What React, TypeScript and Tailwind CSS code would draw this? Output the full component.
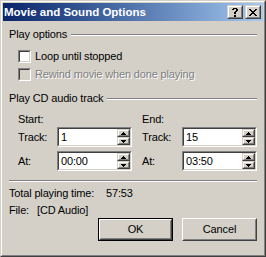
import React from "react";

function CaptionBtn({ children }: { children: React.ReactNode }) {
  return (
    <div className="w-[16px] h-[14px] border border-t-[#D4D0C8] border-l-[#D4D0C8] border-r-[#404040] border-b-[#404040]">
      <div className="w-full h-full border border-t-white border-l-white border-r-[#808080] border-b-[#808080] bg-[#D4D0C8] flex items-center justify-center">
        {children}
      </div>
    </div>
  );
}

function Checkbox({ disabled }: { disabled?: boolean }) {
  return (
    <div className="w-[13px] h-[13px] shrink-0 border border-t-[#808080] border-l-[#808080] border-r-white border-b-white">
      <div
        className={`w-full h-full border border-t-[#404040] border-l-[#404040] border-r-[#D4D0C8] border-b-[#D4D0C8] ${
          disabled ? "bg-[#D4D0C8]" : "bg-white"
        }`}
      />
    </div>
  );
}

function SpinHalf({ up }: { up?: boolean }) {
  return (
    <div className="h-[8px] border border-t-[#D4D0C8] border-l-[#D4D0C8] border-r-[#404040] border-b-[#404040]">
      <div className="w-full h-full border border-t-white border-l-white border-r-[#808080] border-b-[#808080] bg-[#D4D0C8] flex items-center justify-center">
        <svg width="5" height="3" viewBox="0 0 5 3" shapeRendering="crispEdges">
          {up ? (
            <>
              <rect x="2" y="0" width="1" height="1" fill="#000" />
              <rect x="1" y="1" width="3" height="1" fill="#000" />
              <rect x="0" y="2" width="5" height="1" fill="#000" />
            </>
          ) : (
            <>
              <rect x="0" y="0" width="5" height="1" fill="#000" />
              <rect x="1" y="1" width="3" height="1" fill="#000" />
              <rect x="2" y="2" width="1" height="1" fill="#000" />
            </>
          )}
        </svg>
      </div>
    </div>
  );
}

function SpinEdit({ value }: { value: string }) {
  return (
    <div className="w-[75px] h-[20px] border border-t-[#808080] border-l-[#808080] border-r-white border-b-white">
      <div className="w-full h-full border border-t-[#404040] border-l-[#404040] border-r-[#D4D0C8] border-b-[#D4D0C8] bg-white flex">
        <div className="flex-1 pl-[2px] flex items-center">{value}</div>
        <div className="w-[13px] flex flex-col">
          <SpinHalf up />
          <SpinHalf />
        </div>
      </div>
    </div>
  );
}

function PushBtn({ children, def }: { children: React.ReactNode; def?: boolean }) {
  const inner = (
    <div className="w-full h-full border border-t-white border-l-white border-r-[#404040] border-b-[#404040]">
      <div className="w-full h-full border border-t-[#D4D0C8] border-l-[#D4D0C8] border-r-[#808080] border-b-[#808080] flex items-center justify-center">
        {children}
      </div>
    </div>
  );
  return (
    <div className={`w-[75px] h-[23px] ${def ? "border border-black" : ""}`}>{inner}</div>
  );
}

function Etched() {
  return <div className="flex-1 h-[2px] border-t border-b border-t-[#808080] border-b-white" />;
}

function GroupLabel({ children }: { children: React.ReactNode }) {
  return (
    <div className="flex items-center gap-[4px] h-[13px]">
      <span>{children}</span>
      <Etched />
    </div>
  );
}

export default function App() {
  return (
    <div className="w-[266px] h-[257px] font-['Liberation_Sans',Arial,sans-serif] text-[11px] leading-[13px] text-black">
      <div className="w-full h-full border border-t-[#D4D0C8] border-l-[#D4D0C8] border-r-[#404040] border-b-[#404040]">
        <div className="w-full h-full border border-t-white border-l-white border-r-[#808080] border-b-[#808080] bg-[#D4D0C8] p-[1px] flex flex-col">
          {/* Title bar */}
          <div className="h-[18px] shrink-0 flex items-center pl-[1px] pr-[2px] bg-gradient-to-r from-[#0A246A] to-[#A6CAF0]">
            <span className="flex-1 text-white font-bold text-[11.5px]">Movie and Sound Options</span>
            <div className="flex gap-[2px]">
              <CaptionBtn>
                <svg width="6" height="9" viewBox="0 0 6 9" shapeRendering="crispEdges">
                  <rect x="1" y="0" width="4" height="1" fill="#000" />
                  <rect x="0" y="1" width="2" height="1" fill="#000" />
                  <rect x="4" y="1" width="2" height="1" fill="#000" />
                  <rect x="4" y="2" width="2" height="1" fill="#000" />
                  <rect x="3" y="3" width="2" height="1" fill="#000" />
                  <rect x="2" y="4" width="2" height="1" fill="#000" />
                  <rect x="2" y="5" width="2" height="1" fill="#000" />
                  <rect x="2" y="7" width="2" height="2" fill="#000" />
                </svg>
              </CaptionBtn>
              <CaptionBtn>
                <svg width="8" height="7" viewBox="0 0 8 7" shapeRendering="crispEdges">
                  <rect x="0" y="0" width="2" height="1" fill="#000" />
                  <rect x="6" y="0" width="2" height="1" fill="#000" />
                  <rect x="1" y="1" width="2" height="1" fill="#000" />
                  <rect x="5" y="1" width="2" height="1" fill="#000" />
                  <rect x="2" y="2" width="4" height="1" fill="#000" />
                  <rect x="3" y="3" width="2" height="1" fill="#000" />
                  <rect x="2" y="4" width="4" height="1" fill="#000" />
                  <rect x="1" y="5" width="2" height="1" fill="#000" />
                  <rect x="5" y="5" width="2" height="1" fill="#000" />
                  <rect x="0" y="6" width="2" height="1" fill="#000" />
                  <rect x="6" y="6" width="2" height="1" fill="#000" />
                </svg>
              </CaptionBtn>
            </div>
          </div>

          {/* Content */}
          <div className="flex flex-col pl-[6px] pr-[6px] tracking-[-0.15px]">
            <div className="mt-[7px]">
              <GroupLabel>Play options</GroupLabel>
            </div>
            <div className="mt-[9px] ml-[9px] flex items-center gap-[4px] h-[13px]">
              <Checkbox />
              <span>Loop until stopped</span>
            </div>
            <div className="mt-[5px] ml-[9px] flex items-center gap-[4px] h-[13px]">
              <Checkbox disabled />
              <span className="text-[#808080] [text-shadow:1px_1px_0_#ffffff]">
                Rewind movie when done playing
              </span>
            </div>

            <div className="mt-[11px]">
              <GroupLabel>Play CD audio track</GroupLabel>
            </div>

            <div className="mt-[8px] ml-[9px] flex gap-[10px]">
              <div className="w-[114px] flex flex-col">
                <div className="h-[13px]">Start:</div>
                <div className="mt-[1px] flex items-center">
                  <span className="w-[39px]">Track:</span>
                  <SpinEdit value="1" />
                </div>
                <div className="mt-[4px] flex items-center">
                  <span className="w-[39px]">At:</span>
                  <SpinEdit value="00:00" />
                </div>
              </div>
              <div className="w-[115px] flex flex-col">
                <div className="h-[13px]">End:</div>
                <div className="mt-[1px] flex items-center">
                  <span className="w-[40px]">Track:</span>
                  <SpinEdit value="15" />
                </div>
                <div className="mt-[4px] flex items-center">
                  <span className="w-[40px]">At:</span>
                  <SpinEdit value="03:50" />
                </div>
              </div>
            </div>

            <div className="mt-[9px] flex">
              <Etched />
            </div>

            <div className="mt-[5px] h-[13px] flex">
              <span className="w-[97px]">Total playing time:</span>
              <span>57:53</span>
            </div>
            <div className="mt-[4px] h-[13px] flex">
              <span className="w-[28px]">File:</span>
              <span>[CD Audio]</span>
            </div>

            <div className="mt-[1px] flex justify-end gap-[9px]">
              <PushBtn def>OK</PushBtn>
              <PushBtn>Cancel</PushBtn>
            </div>
          </div>
        </div>
      </div>
    </div>
  );
}
